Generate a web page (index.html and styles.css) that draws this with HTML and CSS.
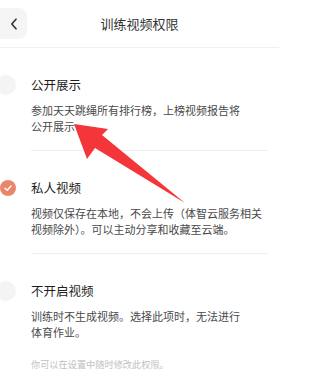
FILE: index.html
```html
<!DOCTYPE html>
<html lang="zh-CN">
<head>
<meta charset="utf-8">
<title>训练视频权限</title>
<link rel="stylesheet" href="styles.css">
</head>
<body>
<div class="page">
  <header class="topbar">
    <div class="back">
      <svg class="chev" width="8" height="12" viewBox="0 0 8 12"><path d="M6 1.2 L1.8 6 L6 10.8" fill="none" stroke="#333" stroke-width="1.6" stroke-linecap="round" stroke-linejoin="round"/></svg>
    </div>
    <h1 class="title">训练视频权限</h1>
    <span class="spacer"></span>
  </header>
  <ul class="options">
    <li class="option">
      <span class="radio"></span>
      <div class="body">
        <div class="name">公开展示</div>
        <p class="desc">参加天天跳绳所有排行榜，上榜视频报告将<br>公开展示</p>
      </div>
    </li>
    <li class="option">
      <span class="radio checked">
        <svg width="16" height="16" viewBox="0 0 16 16"><path d="M5 8.3 L7.2 10.3 L11 6" fill="none" stroke="#fff" stroke-width="1.5" stroke-linecap="round" stroke-linejoin="round"/></svg>
      </span>
      <div class="body">
        <div class="name">私人视频</div>
        <p class="desc">视频仅保存在本地，不会上传（体智云服务相关<br>视频除外）。可以主动分享和收藏至云端。</p>
      </div>
    </li>
    <li class="option">
      <span class="radio"></span>
      <div class="body">
        <div class="name">不开启视频</div>
        <p class="desc">训练时不生成视频。选择此项时，无法进行<br>体育作业。</p>
      </div>
    </li>
  </ul>
  <p class="note">你可以在设置中随时修改此权限。</p>
  <svg class="arrow" viewBox="0 0 279 378" width="279" height="378">
    <polygon points="74,124 108,129 102,135 185,203 95,148 87,159" fill="#f4363a"/>
  </svg>
</div>
</body>
</html>
```
FILE: styles.css
```css
body {
  margin: 0;
  background: #fff;
  font-family: "Noto Sans CJK SC", "Noto Sans", sans-serif;
}
.page {
  position: relative;
  width: 279px;
  height: 378px;
  overflow: hidden;
}
.topbar {
  display: grid;
  grid-template-columns: 27px 1fr 27px;
  align-items: center;
  height: 47px;
  border-bottom: 1px solid #f0f0f0;
}
.back {
  height: 31px;
  background: #f5f5f5;
  border-radius: 0 8px 8px 0;
  display: flex;
  align-items: center;
  justify-content: center;
}
.title {
  margin: 0;
  text-align: center;
  font-size: 13px;
  font-weight: 400;
  color: #333;
}
.options {
  list-style: none;
  margin: 0;
  padding: 0;
}
.option {
  display: grid;
  grid-template-columns: 31px 1fr;
  align-items: start;
  padding-top: 28px;
}
.radio {
  width: 20px;
  height: 20px;
  border-radius: 50%;
  background: #f4f4f4;
  margin-left: -4px;
  margin-top: -1px;
}
.radio.checked {
  width: 16px;
  height: 16px;
  margin-left: 0;
  margin-top: 1px;
  background: #e9866b;
  display: flex;
}
.body {
  margin-right: 11px;
  padding-bottom: 16px;
  border-bottom: 1px solid #eeeeee;
}
.option:last-child .body {
  border-bottom: none;
}
.name {
  font-size: 12.5px;
  line-height: 18px;
  color: #1e1e1e;
}
.desc {
  margin: 8px 0 0;
  font-size: 11px;
  line-height: 16px;
  color: #4a4a4a;
}
.note {
  margin: 1px 0 0;
  padding-left: 31px;
  font-size: 9.2px;
  line-height: 14px;
  color: #c2c2c2;
}
.arrow {
  position: absolute;
  left: 0;
  top: 0;
  pointer-events: none;
}
```
